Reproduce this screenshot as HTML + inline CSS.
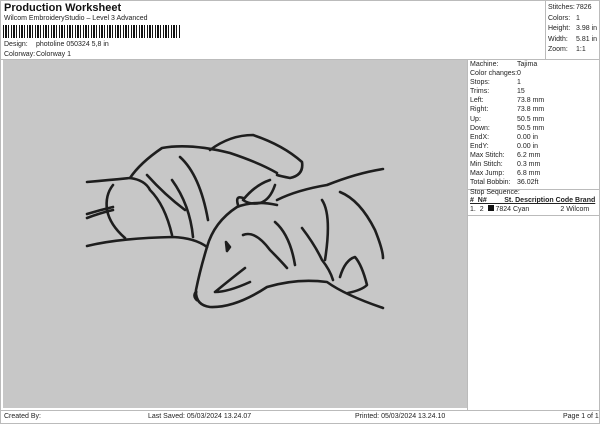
<!DOCTYPE html>
<html><head><style>
body{margin:0;width:600px;height:424px;background:#fff;font-family:"Liberation Sans",sans-serif;position:relative;overflow:hidden;color:#222}
.a{position:absolute;white-space:nowrap;font-size:7px}
.g{position:absolute;left:3px;top:60px;width:464px;height:348px;background:#c7c7c7}
.bc{position:absolute;left:3px;top:25px;height:13px;width:178px;background:repeating-linear-gradient(90deg,#111 0 1px,#fff 1px 2px,#111 2px 4px,#fff 4px 5px,#111 5px 6px,#fff 6px 8px)}
</style></head><body>
<div style="position:absolute;left:0;top:0;width:600px;height:424px;border:1px solid #bbb;box-sizing:border-box"></div>
<div class="a" style="left:4px;top:2px;font-size:11px;font-weight:bold;color:#111">Production Worksheet</div>
<div class="a" style="left:4px;top:15px">Wilcom EmbroideryStudio – Level 3 Advanced</div>
<div class="bc"></div>
<div class="a" style="left:4px;top:41px">Design:</div><div class="a" style="left:36px;top:41px">photoline 050324 5,8 in</div>
<div class="a" style="left:4px;top:51px">Colorway:</div><div class="a" style="left:36px;top:51px">Colorway 1</div>
<div style="position:absolute;left:545px;top:0;width:1px;height:60px;background:#bbb"></div>
<div style="position:absolute;left:0;top:59px;width:600px;height:1px;background:#bbb"></div>
<div class="a" style="left:548px;top:3px;line-height:10.5px">Stitches:<br>Colors:<br>Height:<br>Width:<br>Zoom:</div>
<div class="a" style="left:576px;top:3px;line-height:10.5px">7826<br>1<br>3.98 in<br>5.81 in<br>1:1</div>
<div class="g"></div>
<svg style="position:absolute;left:0;top:0" width="600" height="424" fill="none" stroke="#1e1e1e" stroke-width="2.6" stroke-linecap="round" stroke-linejoin="round">
<path d="M87,182 Q110,180 130,178 Q140,163 162,148 Q190,143 230,153 Q260,163 277,173"/>
<path d="M210,150 Q230,135 253,135 Q283,145 302,162 Q304,175 290,178 Q280,176 277,175"/>
<path d="M277,200 Q297,190 327,185 Q357,173 383,169"/>
<path d="M207,247 Q214,222 237,207 Q255,200 277,205"/>
<path d="M207,247 Q200,270 196,290 Q195,305 210,307 Q235,308 267,287 Q297,278 327,282 Q345,295 383,308"/>
<path d="M87,246 Q120,238 173,237 Q195,238 207,247"/>
<path d="M87,218 Q100,213 113,210 M87,214 Q100,210 113,207"/>
<path d="M113,185 Q105,195 107,210 Q110,225 125,238"/>
<path d="M130,178 Q145,180 150,190 Q165,205 172,235"/>
<path d="M147,175 Q165,195 185,210"/>
<path d="M180,157 Q200,175 208,220"/>
<path d="M172,180 Q190,205 193,237"/>
<path d="M270,180 Q255,185 243,200 Q250,205 260,203 Q270,200 275,185"/>
<path d="M243,198 Q235,195 238,205"/>
<path d="M243,235 Q255,230 270,250 Q280,260 287,268"/>
<path d="M275,222 Q290,235 295,265"/>
<path d="M302,228 Q315,245 322,260 Q330,270 333,280"/>
<path d="M322,200 Q332,215 325,260"/>
<path d="M340,192 Q360,200 375,230 Q383,250 383,258"/>
<path d="M340,277 Q345,260 355,257 Q362,265 367,285 Q362,290 348,293"/>
<path d="M245,268 Q232,278 215,292 Q228,292 250,282"/>
<path d="M226,242 l4,5 l-3,4 z" fill="#222"/>
<path d="M196,292 q-3,4 1,8" stroke-width="3"/>
</svg>
<div style="position:absolute;left:467px;top:60px;width:1px;height:350px;background:#bbb"></div>
<div class="a" style="left:470px;top:60px;line-height:9.1px">Machine:<br>Color changes:<br>Stops:<br>Trims:<br>Left:<br>Right:<br>Up:<br>Down:<br>EndX:<br>EndY:<br>Max Stitch:<br>Min Stitch:<br>Max Jump:<br>Total Bobbin:</div>
<div class="a" style="left:517px;top:60px;line-height:9.1px">Tajima<br>0<br>1<br>15<br>73.8 mm<br>73.8 mm<br>50.5 mm<br>50.5 mm<br>0.00 in<br>0.00 in<br>6.2 mm<br>0.3 mm<br>6.8 mm<br>36.02ft</div>
<div style="position:absolute;left:467px;top:189px;width:133px;height:1px;background:#bbb"></div>
<div class="a" style="left:470px;top:189px">Stop Sequence:</div>
<div class="a" style="left:470px;top:197px;font-weight:bold;text-decoration:underline"># &nbsp;N#&nbsp;&nbsp;&nbsp;&nbsp;&nbsp;&nbsp;&nbsp;&nbsp;&nbsp;St. Description Code Brand</div>
<div class="a" style="left:470px;top:205px">1. &nbsp;2 &nbsp;<span style="display:inline-block;width:6px;height:6px;background:#111"></span> 7824 Cyan &nbsp;&nbsp;&nbsp;&nbsp;&nbsp;&nbsp;&nbsp;&nbsp;&nbsp;&nbsp;&nbsp;&nbsp;&nbsp;&nbsp;&nbsp;2 Wilcom</div>
<div style="position:absolute;left:467px;top:215px;width:133px;height:1px;background:#bbb"></div>
<div style="position:absolute;left:0;top:410px;width:600px;height:1px;background:#bbb"></div>
<div class="a" style="left:4px;top:413px">Created By:</div>
<div class="a" style="left:148px;top:413px">Last Saved: 05/03/2024 13.24.07</div>
<div class="a" style="left:355px;top:413px">Printed: 05/03/2024 13.24.10</div>
<div class="a" style="left:563px;top:413px">Page 1 of 1</div>
</body></html>
